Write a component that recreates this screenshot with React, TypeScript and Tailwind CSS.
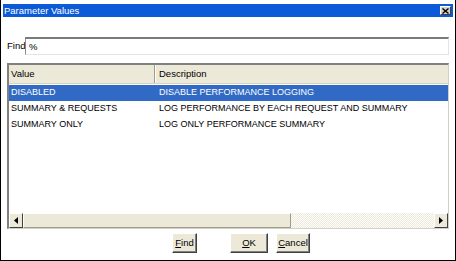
import React from 'react';

const rows = [
  { value: 'DISABLED', desc: 'DISABLE PERFORMANCE LOGGING', selected: true },
  { value: 'SUMMARY & REQUESTS', desc: 'LOG PERFORMANCE BY EACH REQUEST AND SUMMARY', selected: false },
  { value: 'SUMMARY ONLY', desc: 'LOG ONLY PERFORMANCE SUMMARY', selected: false },
];

const ArrowButton: React.FC<{ dir: 'left' | 'right' }> = ({ dir }) => (
  <div className="w-[14px] h-full bg-[#ece9d8] border border-t-white border-l-white border-r-[#404040] border-b-[#404040] flex items-center justify-center">
    <svg width="4" height="7" viewBox="0 0 4 7">
      {dir === 'left' ? <polygon points="4,0 4,7 0,3.5" fill="#000" /> : <polygon points="0,0 0,7 4,3.5" fill="#000" />}
    </svg>
  </div>
);

const DlgButton: React.FC<{ width: string; children: React.ReactNode }> = ({ width, children }) => (
  <button className={`${width} h-[20px] bg-[#ece9d8] border border-t-white border-l-white border-r-[#404040] border-b-[#404040] shadow-[inset_-1px_-1px_0_#808080] text-[9.5px] text-black flex items-center justify-center`}>
    {children}
  </button>
);

export default function App() {
  return (
    <div className="w-[456px] h-[261px] bg-white border-l border-r border-b border-black flex flex-col font-['Liberation_Sans',Arial,sans-serif] overflow-hidden">
      {/* title bar */}
      <div className="mt-[4px] mx-[2px] h-[13px] bg-[#0c5ad8] flex items-center justify-between pl-[1px] pr-[2px]">
        <span className="text-white text-[9.5px] leading-none">Parameter Values</span>
        <div className="w-[11px] h-[9px] bg-[#d4d0c8] border border-t-white border-l-white border-r-[#404040] border-b-[#404040] flex items-center justify-center">
          <svg width="7" height="6" viewBox="0 0 7 6">
            <path d="M0.5 0.5 L6.5 5.5 M6.5 0.5 L0.5 5.5" stroke="#000" strokeWidth="1.4" />
          </svg>
        </div>
      </div>

      <div className="flex-1 flex flex-col px-[6px]">
        {/* find row */}
        <div className="mt-[20px] flex items-center h-[18px]">
          <span className="w-[18px] text-[9.5px] text-black leading-none">Find</span>
          <div className="flex-1 h-[18px] bg-white border-t-2 border-l border-t-[#7a7a7a] border-l-[#8a8a8a] border-r border-b border-r-[#e4e4e4] border-b-[#e4e4e4] flex items-center pl-[3px]">
            <span className="text-[9.5px] leading-none text-black">%</span>
          </div>
        </div>

        {/* table */}
        <div className="mt-[8px] h-[166px] flex flex-col border-t-2 border-l-2 border-t-[#808080] border-l-[#808080] border-r border-b border-r-[#d4d0c8] border-b-[#d4d0c8] bg-white">
          <div className="h-[19px] bg-[#ece9d8] flex border-b border-[#d8d4c4] text-[9.5px] text-black">
            <div className="w-[146px] flex items-center pl-[2px] border-r border-r-[#a09c8c]">Value</div>
            <div className="flex-1 flex items-center pl-[3px] border-l border-l-white">Description</div>
          </div>
          <div className="h-[1px]" />
          {rows.map((r) => (
            <div
              key={r.value}
              className={`h-[16px] flex items-center text-[9px] ${r.selected ? 'bg-[#316ac5] text-white' : 'text-black'}`}
            >
              <div className="w-[148px] pl-[2px]">{r.value}</div>
              <div className="flex-1 pl-[2px]">{r.desc}</div>
            </div>
          ))}
          <div className="flex-1" />
          <div className="h-[15px] flex">
            <ArrowButton dir="left" />
            <div className="w-[268px] h-full bg-[#ece9d8] border border-t-white border-l-white border-r-[#a09c8c] border-b-[#a09c8c]" />
            <div className="flex-1 h-full bg-[repeating-conic-gradient(#ece9d8_0_25%,#ffffff_0_50%)] bg-[length:2px_2px]" />
            <ArrowButton dir="right" />
          </div>
        </div>

        {/* buttons */}
        <div className="mt-[4px] flex pl-[165px]">
          <DlgButton width="w-[25px]">
            <span><span className="underline">F</span>ind</span>
          </DlgButton>
          <div className="w-[33px]" />
          <DlgButton width="w-[38px]">
            <span><span className="underline">O</span>K</span>
          </DlgButton>
          <div className="w-[8px]" />
          <DlgButton width="w-[34px]">
            <span><span className="underline">C</span>ancel</span>
          </DlgButton>
        </div>
      </div>
    </div>
  );
}
